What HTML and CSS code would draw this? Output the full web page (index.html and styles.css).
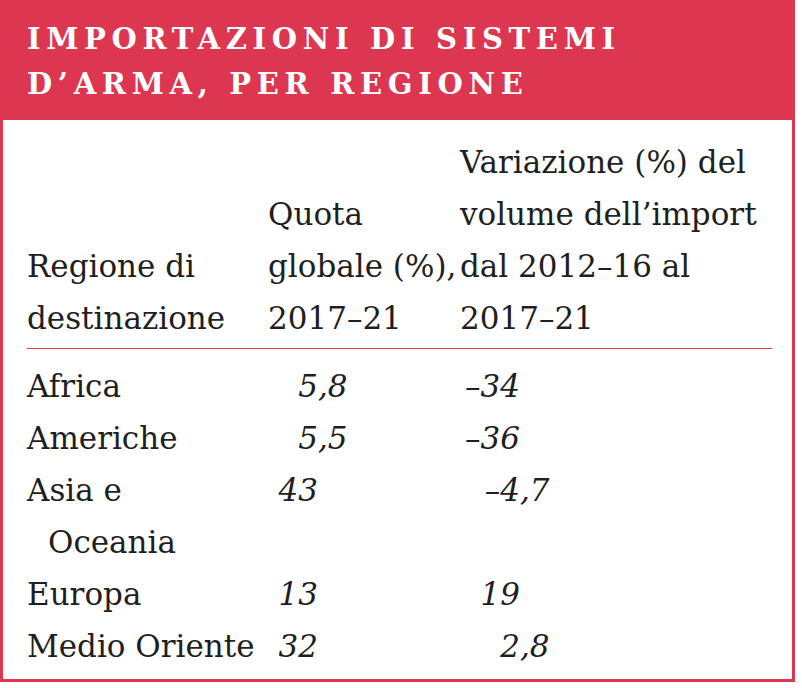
FILE: index.html
```html
<!DOCTYPE html>
<html lang="it">
<head>
<meta charset="utf-8">
<title>Importazioni di sistemi d’arma, per regione</title>
<link rel="stylesheet" href="styles.css">
</head>
<body>
<div class="box">
  <div class="head">
    <h1 class="title">Importazioni di sistemi<br>d’arma, per regione</h1>
  </div>
  <div class="body">
    <table class="tbl">
      <colgroup>
        <col class="c1"><col class="c2"><col class="c3">
      </colgroup>
      <thead>
        <tr>
          <th>Regione di<br>destinazione</th>
          <th>Quota<br>globale (%),<br>2017–21</th>
          <th>Variazione (%) del<br>volume dell’import<br>dal 2012–16 al<br>2017–21</th>
        </tr>
      </thead>
      <tbody>
        <tr>
          <td class="reg">Africa</td>
          <td class="num n2"><span class="int">5</span><span class="dec">,8</span></td>
          <td class="num n3"><span class="int">–34</span></td>
        </tr>
        <tr>
          <td class="reg">Americhe</td>
          <td class="num n2"><span class="int">5</span><span class="dec">,5</span></td>
          <td class="num n3"><span class="int">–36</span></td>
        </tr>
        <tr>
          <td class="reg">Asia e<br>Oceania</td>
          <td class="num n2"><span class="int">43</span></td>
          <td class="num n3"><span class="int">–4</span><span class="dec">,7</span></td>
        </tr>
        <tr>
          <td class="reg">Europa</td>
          <td class="num n2"><span class="int">13</span></td>
          <td class="num n3"><span class="int">19</span></td>
        </tr>
        <tr>
          <td class="reg">Medio Oriente</td>
          <td class="num n2"><span class="int">32</span></td>
          <td class="num n3"><span class="int">2</span><span class="dec">,8</span></td>
        </tr>
      </tbody>
    </table>
  </div>
</div>
</body>
</html>
```
FILE: styles.css
```css
html, body {
  margin: 0;
  padding: 0;
  background: #ffffff;
}

.box {
  box-sizing: border-box;
  width: 795px;
  height: 682px;
  border: 3px solid #dc3650;
  border-top: 0;
  background: #ffffff;
}

.head {
  background: #dc3650;
  margin: 0 -3px;
  padding: 17px 0 13px 27px;
}

.title {
  margin: 0;
  font-family: "DejaVu Serif", serif;
  font-weight: 700;
  font-size: 29px;
  line-height: 45px;
  letter-spacing: 5.7px;
  text-transform: uppercase;
  color: #ffffff;
}

.body {
  padding: 16px 19px 0 24px;
}

.tbl {
  width: 745px;
  border-collapse: collapse;
  table-layout: fixed;
  font-family: "DejaVu Serif", serif;
  font-size: 31px;
  line-height: 52px;
  color: #1f1f1f;
}

.c1 { width: 241px; }
.c2 { width: 192px; }
.c3 { width: 312px; }

.tbl th {
  font-weight: 400;
  text-align: left;
  vertical-align: bottom;
  padding: 0 0 4px 0;
  white-space: nowrap;
  border-bottom: 1px solid #dc3650;
}

.tbl td {
  padding: 0;
  vertical-align: top;
}

.tbl tbody tr:first-child td {
  padding-top: 11px;
}

.reg {
  padding-left: 21px !important;
  text-indent: -21px;
  white-space: nowrap;
}

.num {
  font-style: italic;
  white-space: nowrap;
}

.int {
  display: inline-block;
  text-align: right;
}

.n2 .int { width: 50px; }
.n3 .int { width: 60px; }
```
